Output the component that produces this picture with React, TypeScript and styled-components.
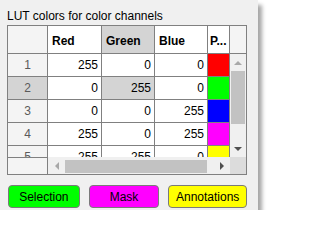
import styled, { createGlobalStyle } from "styled-components";

const GlobalStyle = createGlobalStyle`
  body {
    margin: 0;
    background: #ffffff;
    font-family: "Liberation Sans", Arial, sans-serif;
  }
`;

const Panel = styled.div`
  box-sizing: border-box;
  width: 258px;
  height: 210px;
  padding: 9px 11px 0 7px;
  background: #f0f0f0;
  box-shadow: 4px 5px 4px rgba(0, 0, 0, 0.35);
  display: flex;
  flex-direction: column;
`;

const Title = styled.div`
  font-size: 12px;
  line-height: 14px;
  color: #000;
  margin-bottom: 2px;
  white-space: nowrap;
`;

const Frame = styled.div`
  box-sizing: border-box;
  width: 240px;
  height: 150px;
  border: 1px solid #808080;
  display: flex;
  flex-direction: column;
  background: #ffffff;
`;

const TopPart = styled.div`
  display: flex;
  height: 131px;
  overflow: hidden;
`;

const Table = styled.div`
  display: grid;
  grid-template-columns: 40px 54px 53px 53px 22px;
  grid-template-rows: 28px;
  grid-auto-rows: 23px;
  width: 222px;
`;

const Cell = styled.div<{ $bg?: string; $kind?: "num" | "head" | "row" }>`
  box-sizing: border-box;
  border-right: 1px solid #808080;
  border-bottom: 1px solid #808080;
  background: ${(p) => p.$bg || "#ffffff"};
  font-size: 12px;
  color: ${(p) => (p.$kind === "row" ? "#5a5a5a" : "#000")};
  font-weight: ${(p) => (p.$kind === "head" ? "bold" : "normal")};
  display: flex;
  align-items: center;
  justify-content: ${(p) =>
    p.$kind === "num" ? "flex-end" : p.$kind === "row" ? "center" : "flex-start"};
  padding: ${(p) => (p.$kind === "num" ? "0 3px 0 0" : p.$kind === "head" ? "2px 0 0 4px" : "0")};
  white-space: nowrap;
  overflow: hidden;
`;

const VColumn = styled.div`
  width: 16px;
  display: flex;
  flex-direction: column;
`;

const Corner = styled.div`
  box-sizing: border-box;
  height: 28px;
  background: #f4f4f4;
  border-bottom: 1px solid #808080;
`;

const VScroll = styled.div`
  flex: 1;
  display: flex;
  flex-direction: column;
  background: #f0f0f0;
`;

const ArrowBtn = styled.div<{ $size: string }>`
  flex: 0 0 17px;
  width: ${(p) => p.$size};
  height: ${(p) => p.$size};
  display: flex;
  align-items: center;
  justify-content: center;
`;

const VThumb = styled.div`
  height: 53px;
  margin: 0 1px;
  background: #c2c2c2;
`;

const Spacer = styled.div`
  flex: 1;
`;

const BottomPart = styled.div`
  display: flex;
  height: 17px;
`;

const BottomLeft = styled.div`
  box-sizing: border-box;
  width: 40px;
  background: #f4f4f4;
  border-top: 1px solid #808080;
  border-right: 1px solid #808080;
`;

const HScroll = styled.div`
  flex: 1;
  display: flex;
  align-items: center;
  background: #f0f0f0;
`;

const HThumb = styled.div`
  width: 142px;
  height: 13px;
  margin-top: 2px;
  background: #c2c2c2;
`;

const BottomCorner = styled.div`
  width: 16px;
  background: #dcdcdc;
`;

const Buttons = styled.div`
  display: flex;
  gap: 9px;
  margin-top: 10px;
  padding-left: 1px;
`;

const ColorButton = styled.button<{ $bg: string; $w: number }>`
  box-sizing: border-box;
  width: ${(p) => p.$w}px;
  height: 23px;
  padding: 0;
  border: 1px solid #7a7a7a;
  border-radius: 4px;
  background: ${(p) => p.$bg};
  font-family: "Liberation Sans", Arial, sans-serif;
  font-size: 12px;
  color: #000;
  text-align: center;
`;

const Arrow = ({ dir, color }: { dir: "up" | "down" | "left" | "right"; color: string }) => {
  const pts = {
    up: "0,4 4,0 8,4",
    down: "0,0 8,0 4,4",
    left: "4,0 4,8 0,4",
    right: "0,0 0,8 4,4",
  }[dir];
  const vertical = dir === "up" || dir === "down";
  return (
    <svg width={vertical ? 8 : 4} height={vertical ? 4 : 8}>
      <polygon points={pts} fill={color} />
    </svg>
  );
};

const rows = [
  { n: 1, r: 255, g: 0, b: 0, c: "#ff0000" },
  { n: 2, r: 0, g: 255, b: 0, c: "#00ff00" },
  { n: 3, r: 0, g: 0, b: 255, c: "#0000ff" },
  { n: 4, r: 255, g: 0, b: 255, c: "#ff00ff" },
  { n: 5, r: 255, g: 255, b: 0, c: "#ffff00" },
];

const SEL = "#d4d4d4";

export default function App() {
  return (
    <>
      <GlobalStyle />
      <Panel>
        <Title>LUT colors for color channels</Title>
        <Frame>
          <TopPart>
            <Table>
              <Cell $bg="#f4f4f4" />
              <Cell $kind="head">Red</Cell>
              <Cell $kind="head" $bg={SEL}>Green</Cell>
              <Cell $kind="head">Blue</Cell>
              <Cell $kind="head" style={{ paddingLeft: 2 }}>P...</Cell>
              {rows.map((row) => {
                const sel = row.n === 2;
                return [
                  <Cell key={row.n + "n"} $kind="row" $bg={sel ? SEL : "#f4f4f4"}>
                    {row.n}
                  </Cell>,
                  <Cell key={row.n + "r"} $kind="num">{row.r}</Cell>,
                  <Cell key={row.n + "g"} $kind="num" $bg={sel ? SEL : undefined}>
                    {row.g}
                  </Cell>,
                  <Cell key={row.n + "b"} $kind="num">{row.b}</Cell>,
                  <Cell key={row.n + "c"} $bg={row.c} />,
                ];
              })}
            </Table>
            <VColumn>
              <Corner />
              <VScroll>
                <ArrowBtn $size="16px">
                  <Arrow dir="up" color="#a8a8a8" />
                </ArrowBtn>
                <VThumb />
                <Spacer />
                <ArrowBtn $size="16px">
                  <Arrow dir="down" color="#505050" />
                </ArrowBtn>
              </VScroll>
            </VColumn>
          </TopPart>
          <BottomPart>
            <BottomLeft />
            <HScroll>
              <ArrowBtn $size="17px">
                <Arrow dir="left" color="#a8a8a8" />
              </ArrowBtn>
              <HThumb />
              <Spacer />
              <ArrowBtn $size="17px">
                <Arrow dir="right" color="#505050" />
              </ArrowBtn>
            </HScroll>
            <BottomCorner />
          </BottomPart>
        </Frame>
        <Buttons>
          <ColorButton $bg="#00ff00" $w={72}>Selection</ColorButton>
          <ColorButton $bg="#ff00ff" $w={71}>Mask</ColorButton>
          <ColorButton $bg="#ffff00" $w={79}>Annotations</ColorButton>
        </Buttons>
      </Panel>
    </>
  );
}
